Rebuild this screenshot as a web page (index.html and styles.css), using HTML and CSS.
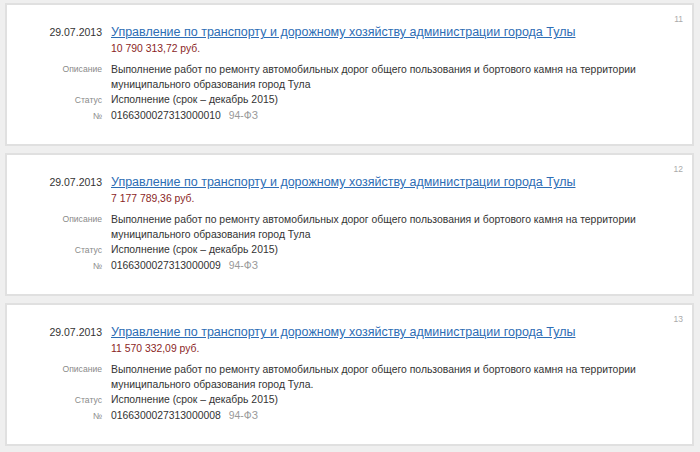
FILE: index.html
```html
<!DOCTYPE html>
<html lang="ru">
<head>
<meta charset="utf-8">
<link rel="stylesheet" href="styles.css">
</head>
<body>
<div class="list">
  <div class="card">
    <span class="num">11</span>
    <div class="row head"><div class="date">29.07.2013</div><div class="val"><a class="title" href="#">Управление по транспорту и дорожному хозяйству администрации города Тулы</a></div></div>
    <div class="row"><div></div><div class="price">10 790 313,72 руб.</div></div>
    <div class="row desc"><div class="label">Описание</div><div class="val">Выполнение работ по ремонту автомобильных дорог общего пользования и бортового камня на территории муниципального образования город Тула</div></div>
    <div class="row"><div class="label">Статус</div><div class="val">Исполнение (срок – декабрь 2015)</div></div>
    <div class="row"><div class="label">№</div><div class="val">0166300027313000010<span class="law">94-ФЗ</span></div></div>
  </div>
  <div class="card">
    <span class="num">12</span>
    <div class="row head"><div class="date">29.07.2013</div><div class="val"><a class="title" href="#">Управление по транспорту и дорожному хозяйству администрации города Тулы</a></div></div>
    <div class="row"><div></div><div class="price">7 177 789,36 руб.</div></div>
    <div class="row desc"><div class="label">Описание</div><div class="val">Выполнение работ по ремонту автомобильных дорог общего пользования и бортового камня на территории муниципального образования город Тула</div></div>
    <div class="row"><div class="label">Статус</div><div class="val">Исполнение (срок – декабрь 2015)</div></div>
    <div class="row"><div class="label">№</div><div class="val">0166300027313000009<span class="law">94-ФЗ</span></div></div>
  </div>
  <div class="card">
    <span class="num">13</span>
    <div class="row head"><div class="date">29.07.2013</div><div class="val"><a class="title" href="#">Управление по транспорту и дорожному хозяйству администрации города Тулы</a></div></div>
    <div class="row"><div></div><div class="price">11 570 332,09 руб.</div></div>
    <div class="row desc"><div class="label">Описание</div><div class="val">Выполнение работ по ремонту автомобильных дорог общего пользования и бортового камня на территории муниципального образования город Тула.</div></div>
    <div class="row"><div class="label">Статус</div><div class="val">Исполнение (срок – декабрь 2015)</div></div>
    <div class="row"><div class="label">№</div><div class="val">0166300027313000008<span class="law">94-ФЗ</span></div></div>
  </div>
</div>
</body>
</html>
```

FILE: styles.css
```css
html, body {
  margin: 0;
  padding: 0;
  background: #efefef;
  font-family: "Liberation Sans", Arial, sans-serif;
  color: #333;
}
.list {
  display: flex;
  flex-direction: column;
  gap: 7px;
  padding: 3px 6px 0 5px;
}
.card {
  position: relative;
  background: #fff;
  border: 2px solid #e0e0e0;
  height: 143px;
  box-sizing: border-box;
  padding-top: 19px;
}
.num {
  position: absolute;
  top: 9px;
  right: 9px;
  font-size: 8.5px;
  color: #aaa;
}
.row {
  display: grid;
  grid-template-columns: 95px 560px;
  column-gap: 9px;
  font-size: 10.4px;
  line-height: 16px;
}
.row.head {
  line-height: 17px;
}
.row.desc {
  margin-top: 5px;
  line-height: 15px;
}
.date {
  text-align: right;
  font-size: 10.5px;
  color: #333;
}
.label {
  text-align: right;
  font-size: 8.6px;
  color: #8a8a8a;
}
.title {
  font-size: 12.5px;
  color: #2d6db5;
  text-decoration: underline;
}
.price {
  color: #8b1f1f;
}
.law {
  margin-left: 8px;
  color: #999;
}
```
